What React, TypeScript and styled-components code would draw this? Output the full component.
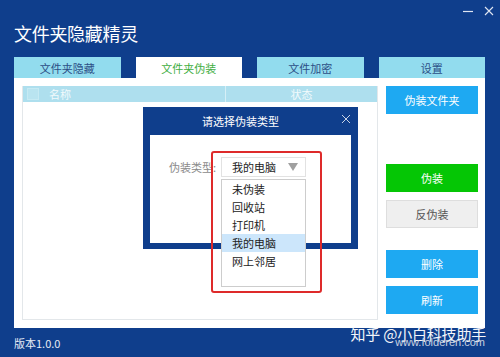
import React from "react";
import styled, { createGlobalStyle } from "styled-components";

const Global = createGlobalStyle`
  html, body { margin: 0; padding: 0; }
  body { font-family: "Noto Sans CJK SC", "Noto Sans", sans-serif; }
`;

const BLUE = "#0f3e8c";

const Window = styled.div`
  position: relative;
  width: 500px;
  height: 357px;
  background: ${BLUE};
  display: flex;
  flex-direction: column;
  overflow: hidden;
`;

const TitleBar = styled.div`
  height: 57px;
  display: flex;
  justify-content: space-between;
  align-items: flex-start;
  padding: 0 6px 0 14px;
  box-sizing: border-box;
`;

const Title = styled.div`
  color: #fff;
  font-size: 18px;
  line-height: 18px;
  margin-top: 24px;
  letter-spacing: -0.3px;
`;

const Controls = styled.div`
  display: flex;
  gap: 11px;
  margin-top: 6px;
  align-items: center;
`;

const Tabs = styled.div`
  display: flex;
  gap: 15px;
  margin: 0 15px 0 14px;
  height: 21px;
`;

const Tab = styled.div<{ $active?: boolean }>`
  flex: 1;
  background: ${(p) => (p.$active ? "#ffffff" : "#92dcee")};
  color: ${(p) => (p.$active ? "#3fae3f" : "#2c4f86")};
  font-size: 11px;
  display: flex;
  align-items: center;
  justify-content: center;
`;

const Panel = styled.div`
  margin: 0 15px 0 14px;
  height: 250px;
  background: #fff;
  display: flex;
  gap: 8px;
  padding: 8px 7px 8px 8px;
  box-sizing: border-box;
`;

const Table = styled.div`
  flex: 1;
  border: 1px solid #e3e7ea;
  border-top: none;
  display: flex;
  flex-direction: column;
`;

const Header = styled.div`
  height: 16px;
  background: #aedfee;
  display: flex;
  align-items: center;
  color: #f2fafc;
  font-size: 11px;
`;

const HeadCell = styled.div<{ $w?: number; $center?: boolean }>`
  ${(p) => (p.$w ? `width: ${p.$w}px;` : "flex: 1;")}
  height: 100%;
  display: flex;
  align-items: center;
  justify-content: ${(p) => (p.$center ? "center" : "flex-start")};
  box-sizing: border-box;
  padding-left: ${(p) => (p.$center ? 0 : 4)}px;
  border-right: ${(p) => (p.$w ? "1px solid #d6eff6" : "none")};
  gap: 10px;
`;

const Check = styled.span`
  width: 10px;
  height: 10px;
  border: 1px solid #c6eaf3;
  background: #b9e4f0;
`;

const Side = styled.div`
  width: 92px;
  display: flex;
  flex-direction: column;
`;

const Btn = styled.div<{ $kind?: "blue" | "green" | "gray"; $mt?: number }>`
  height: 28px;
  margin-top: ${(p) => p.$mt ?? 0}px;
  box-sizing: border-box;
  display: flex;
  align-items: center;
  justify-content: center;
  font-size: 11px;
  background: ${(p) =>
    p.$kind === "green" ? "#05c605" : p.$kind === "gray" ? "#efefef" : "#1ea9f2"};
  color: ${(p) => (p.$kind === "gray" ? "#555" : "#ffffff")};
  border: ${(p) => (p.$kind === "gray" ? "1px solid #dedede" : "none")};
`;

const Footer = styled.div`
  flex: 1;
  display: flex;
  justify-content: space-between;
  align-items: center;
  padding: 0 14px;
  position: relative;
`;

const Version = styled.div`
  color: #e6ecf5;
  font-size: 11px;
  margin-top: 1px;
`;

const Watermark = styled.div`
  position: absolute;
  right: 14px;
  top: -2px;
  text-align: right;
  line-height: 1;
`;

const Zhihu = styled.div`
  color: #f4f6fa;
  font-size: 15px;
  letter-spacing: -0.2px;
`;

const Site = styled.div`
  color: #c9d2e0;
  font-family: "Liberation Sans", Arial, sans-serif;
  font-size: 11px;
  margin-top: -4px;
  margin-right: 1px;
`;

const Dialog = styled.div`
  position: absolute;
  left: 143px;
  top: 107px;
  width: 215px;
  height: 142px;
  background: ${BLUE};
  display: flex;
  flex-direction: column;
  padding: 0 7px 6px 7px;
  box-sizing: border-box;
`;

const DialogHead = styled.div`
  height: 28px;
  display: flex;
  align-items: center;
  justify-content: center;
  padding-right: 20px;
  color: #fff;
  font-size: 11px;
  position: relative;
`;

const Close = styled.span`
  position: absolute;
  right: 0px;
  top: 7px;
  display: flex;
`;

const DialogBody = styled.div`
  flex: 1;
  background: #fff;
  padding: 22px 0 0 19px;
  display: flex;
  align-items: flex-start;
`;

const Label = styled.div`
  width: 52px;
  height: 20px;
  display: flex;
  align-items: center;
  color: #8a8a8a;
  font-size: 11px;
`;

const Select = styled.div`
  width: 85px;
  height: 20px;
  border: 1px solid #e2e2e2;
  box-sizing: border-box;
  display: flex;
  align-items: center;
  justify-content: space-between;
  padding: 0 7px 0 10px;
  font-size: 11px;
  color: #222;
`;

const Arrow = styled.span`
  width: 0;
  height: 0;
  border-left: 5px solid transparent;
  border-right: 5px solid transparent;
  border-top: 8px solid #a0a0a0;
`;

const List = styled.div`
  position: absolute;
  left: 221px;
  top: 179px;
  width: 85px;
  height: 108px;
  background: #fff;
  border: 1px solid #cdcdcd;
  box-sizing: border-box;
  display: flex;
  flex-direction: column;
`;

const Item = styled.div<{ $sel?: boolean }>`
  height: 18px;
  display: flex;
  align-items: center;
  padding-left: 10px;
  font-size: 11px;
  color: #222;
  background: ${(p) => (p.$sel ? "#cce6fb" : "transparent")};
`;

const RedBox = styled.div`
  position: absolute;
  left: 211px;
  top: 151px;
  width: 111px;
  height: 142px;
  border: 2px solid #de2a2a;
  border-radius: 3px;
  box-sizing: border-box;
`;

const items = ["未伪装", "回收站", "打印机", "我的电脑", "网上邻居"];

export default function App() {
  return (
    <>
      <Global />
      <Window>
        <TitleBar>
          <Title>文件夹隐藏精灵</Title>
          <Controls>
            <svg width="10" height="10" viewBox="0 0 10 10">
              <line x1="0" y1="5.5" x2="10" y2="5.5" stroke="#dfe6f2" strokeWidth="1.2" />
            </svg>
            <svg width="10" height="10" viewBox="0 0 10 10">
              <path d="M1 1 L9 9 M9 1 L1 9" stroke="#dfe6f2" strokeWidth="1.1" />
            </svg>
          </Controls>
        </TitleBar>
        <Tabs>
          <Tab>文件夹隐藏</Tab>
          <Tab $active>文件夹伪装</Tab>
          <Tab>文件加密</Tab>
          <Tab>设置</Tab>
        </Tabs>
        <Panel>
          <Table>
            <Header>
              <HeadCell $w={203}>
                <Check />
                名称
              </HeadCell>
              <HeadCell $center>状态</HeadCell>
            </Header>
          </Table>
          <Side>
            <Btn>伪装文件夹</Btn>
            <Btn $kind="green" $mt={50}>伪装</Btn>
            <Btn $kind="gray" $mt={8}>反伪装</Btn>
            <Btn $mt={22}>删除</Btn>
            <Btn $mt={8}>刷新</Btn>
          </Side>
        </Panel>
        <Footer>
          <Version>版本1.0.0</Version>
          <Watermark>
            <Zhihu>知乎 @小白科技助手</Zhihu>
            <Site>www.folderen.com</Site>
          </Watermark>
        </Footer>
        <Dialog>
          <DialogHead>
            请选择伪装类型
            <Close>
              <svg width="10" height="10" viewBox="0 0 10 10">
                <path d="M1 1 L9 9 M9 1 L1 9" stroke="#c9d3e6" strokeWidth="1" />
              </svg>
            </Close>
          </DialogHead>
          <DialogBody>
            <Label>伪装类型:</Label>
            <Select>
              我的电脑
              <Arrow />
            </Select>
          </DialogBody>
        </Dialog>
        <List>
          {items.map((t) => (
            <Item key={t} $sel={t === "我的电脑"}>
              {t}
            </Item>
          ))}
        </List>
        <RedBox />
      </Window>
    </>
  );
}
